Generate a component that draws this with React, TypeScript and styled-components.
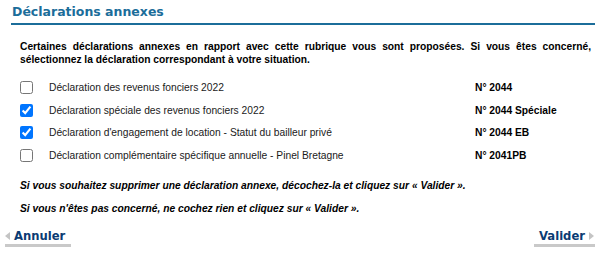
import styled, { createGlobalStyle } from 'styled-components';

const GlobalStyle = createGlobalStyle`
  body {
    margin: 0;
    background: #ffffff;
    font-family: 'Liberation Sans', Arial, sans-serif;
    color: #000000;
  }
`;

const Page = styled.div`
  width: 606px;
  height: 260px;
  box-sizing: border-box;
  padding: 4px 11px 0 11px;
  display: flex;
  flex-direction: column;
`;

const Title = styled.h2`
  margin: 0;
  padding: 0 0 3px 1px;
  font-family: 'DejaVu Sans', Verdana, sans-serif;
  font-size: 12.5px;
  font-weight: bold;
  color: #1b6d9a;
  border-bottom: 2px solid #1b6d9a;
  line-height: 16px;
`;

const Body = styled.div`
  padding: 16px 4px 0 9px;
  display: flex;
  flex-direction: column;
`;

const Intro = styled.p`
  margin: 0;
  font-size: 10.25px;
  font-weight: bold;
  line-height: 12.5px;
  text-align: justify;
`;

const List = styled.ul`
  list-style: none;
  margin: 15px 0 0 0;
  padding: 0;
  display: flex;
  flex-direction: column;
  gap: 9.7px;
`;

const Row = styled.li`
  display: flex;
  align-items: center;
  height: 13px;
  font-size: 10.25px;
`;

const Check = styled.input.attrs({ type: 'checkbox' })`
  margin: 0 16px 0 0;
  width: 13px;
  height: 13px;
  accent-color: #0075ff;
`;

const Label = styled.span`
  width: 426px;
  color: #1a1a1a;
`;

const Code = styled.span`
  font-weight: bold;
`;

const Notes = styled.div`
  margin-top: 17.5px;
  display: flex;
  flex-direction: column;
  gap: 11px;
`;

const Note = styled.p`
  margin: 0;
  font-size: 10.25px;
  font-weight: bold;
  font-style: italic;
  line-height: 12px;
`;

const Actions = styled.div`
  margin: 14px 0 0 -6px;
  display: flex;
  justify-content: space-between;
`;

const NavButton = styled.a<{ $dir: 'prev' | 'next' }>`
  display: inline-flex;
  align-items: center;
  gap: 4px;
  flex-direction: ${p => (p.$dir === 'prev' ? 'row' : 'row-reverse')};
  padding: ${p => (p.$dir === 'prev' ? '0 6px 0 0' : '0 1px 0 5px')};
  font-family: 'DejaVu Sans', Verdana, sans-serif;
  font-size: 11.6px;
  font-weight: bold;
  color: #0b3b73;
  text-decoration: none;
  border-bottom: 3px solid #c9c9c9;
  line-height: 15px;
  cursor: pointer;
`;

const Arrow = styled.span<{ $dir: 'prev' | 'next' }>`
  width: 0;
  height: 0;
  border-top: 4px solid transparent;
  border-bottom: 4px solid transparent;
  ${p =>
    p.$dir === 'prev'
      ? 'border-right: 5px solid #c4c4c4;'
      : 'border-left: 5px solid #c4c4c4;'}
`;

const rows = [
  { label: 'Déclaration des revenus fonciers 2022', code: 'N° 2044', checked: false },
  { label: 'Déclaration spéciale des revenus fonciers 2022', code: 'N° 2044 Spéciale', checked: true },
  { label: "Déclaration d'engagement de location - Statut du bailleur privé", code: 'N° 2044 EB', checked: true },
  { label: 'Déclaration complémentaire spécifique annuelle - Pinel Bretagne', code: 'N° 2041PB', checked: false },
];

const App = () => {
  return (
    <>
      <GlobalStyle />
      <Page>
        <Title>Déclarations annexes</Title>
        <Body>
          <Intro>
            Certaines déclarations annexes en rapport avec cette rubrique vous sont proposées. Si vous êtes concerné,
            sélectionnez la déclaration correspondant à votre situation.
          </Intro>
          <List>
            {rows.map(r => (
              <Row key={r.code}>
                <Check defaultChecked={r.checked} />
                <Label>{r.label}</Label>
                <Code>{r.code}</Code>
              </Row>
            ))}
          </List>
          <Notes>
            <Note>Si vous souhaitez supprimer une déclaration annexe, décochez-la et cliquez sur « Valider ».</Note>
            <Note>Si vous n'êtes pas concerné, ne cochez rien et cliquez sur « Valider ».</Note>
          </Notes>
        </Body>
        <Actions>
          <NavButton $dir="prev">
            <Arrow $dir="prev" />
            Annuler
          </NavButton>
          <NavButton $dir="next">
            <Arrow $dir="next" />
            Valider
          </NavButton>
        </Actions>
      </Page>
    </>
  );
};

export default App;
